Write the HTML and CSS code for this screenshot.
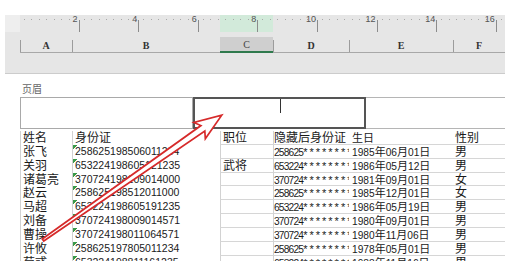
FILE: index.html
```html
<!DOCTYPE html>
<html lang="zh-CN">
<head>
<meta charset="utf-8">
<title>页眉</title>
<link rel="stylesheet" href="styles.css">
</head>
<body>
<div class="topgap"></div>
<div class="chrome">
  <div class="ruler">
    <div class="ruler-left"></div>
    <div class="ruler-main">
      <div class="seg"><span>2</span></div>
      <div class="seg"><span>4</span></div>
      <div class="seg"><span>6</span></div>
      <div class="seg"><span>8</span></div>
      <div class="seg"><span>10</span></div>
      <div class="seg"><span>12</span></div>
      <div class="seg"><span>14</span></div>
      <div class="seg"><span>16</span></div>
    </div>
  </div>
  <div class="colhead">
    <div class="ch">A</div>
    <div class="ch">B</div>
    <div class="ch sel">C</div>
    <div class="ch">D</div>
    <div class="ch">E</div>
    <div class="ch">F</div>
  </div>
</div>

<div class="page">
  <div class="label">页眉</div>
  <div class="hdrbox">
    <div class="hb1"></div>
    <div class="hb2"><div class="caret"></div></div>
    <div class="hb3"></div>
  </div>

  <div class="tbl">
    <div class="c a">姓名</div><div class="c b">身份证</div><div class="c cc">职位</div><div class="c d">隐藏后身份证</div><div class="c e">生日</div><div class="c f">性别</div>

    <div class="c a">张飞</div><div class="c b id">258625198506011234</div><div class="c cc"></div><div class="c d"><span class="dn">258625</span><span class="st">********</span></div><div class="c e"><span class="n">1985</span>年<span class="n">06</span>月<span class="n">01</span>日</div><div class="c f">男</div>

    <div class="c a">关羽</div><div class="c b id">653224198605121235</div><div class="c cc">武将</div><div class="c d"><span class="dn">653224</span><span class="st">********</span></div><div class="c e"><span class="n">1986</span>年<span class="n">05</span>月<span class="n">12</span>日</div><div class="c f">男</div>

    <div class="c a">诸葛亮</div><div class="c b id">370724198109014000</div><div class="c cc"></div><div class="c d"><span class="dn">370724</span><span class="st">********</span></div><div class="c e"><span class="n">1981</span>年<span class="n">09</span>月<span class="n">01</span>日</div><div class="c f">女</div>

    <div class="c a">赵云</div><div class="c b id">258625198512011000</div><div class="c cc"></div><div class="c d"><span class="dn">258625</span><span class="st">********</span></div><div class="c e"><span class="n">1985</span>年<span class="n">12</span>月<span class="n">01</span>日</div><div class="c f">女</div>

    <div class="c a">马超</div><div class="c b id">653224198605191235</div><div class="c cc"></div><div class="c d"><span class="dn">653224</span><span class="st">********</span></div><div class="c e"><span class="n">1986</span>年<span class="n">05</span>月<span class="n">19</span>日</div><div class="c f">男</div>

    <div class="c a">刘备</div><div class="c b id">370724198009014571</div><div class="c cc"></div><div class="c d"><span class="dn">370724</span><span class="st">********</span></div><div class="c e"><span class="n">1980</span>年<span class="n">09</span>月<span class="n">01</span>日</div><div class="c f">男</div>

    <div class="c a">曹操</div><div class="c b id">370724198011064571</div><div class="c cc"></div><div class="c d"><span class="dn">370724</span><span class="st">********</span></div><div class="c e"><span class="n">1980</span>年<span class="n">11</span>月<span class="n">06</span>日</div><div class="c f">男</div>

    <div class="c a">许攸</div><div class="c b id">258625197805011234</div><div class="c cc"></div><div class="c d"><span class="dn">258625</span><span class="st">********</span></div><div class="c e"><span class="n">1978</span>年<span class="n">05</span>月<span class="n">01</span>日</div><div class="c f">男</div>

    <div class="c a">荀彧</div><div class="c b id">653224198811161235</div><div class="c cc"></div><div class="c d"><span class="dn">653224</span><span class="st">********</span></div><div class="c e"><span class="n">1988</span>年<span class="n">11</span>月<span class="n">16</span>日</div><div class="c f">男</div>
  </div>
</div>

<svg class="arrow" width="512" height="261" viewBox="0 0 512 261" aria-hidden="true">
  <g transform="translate(43 240) rotate(-34.93)">
    <polygon points="0,-1.3 195,-3.4 191,-10 218,0 191,10 195,3.4 0,1.3" fill="#ffffff" stroke="#d62a2a" stroke-width="1.7" stroke-linejoin="miter"/>
  </g>
</svg>
</body>
</html>
```

FILE: styles.css
```css
* { box-sizing: border-box; }

html, body {
  margin: 0;
  padding: 0;
}

body {
  width: 512px;
  height: 261px;
  overflow: hidden;
  background: #ffffff;
  position: relative;
  font-family: "Noto Sans CJK SC", "Liberation Sans", sans-serif;
  color: #1a1a1a;
}

.topgap { height: 15px; }

.chrome {
  margin-left: 5px;
  width: 500px;
  height: 59px;
  background: #e6e6e6;
  border-bottom: 1px solid #cccccc;
}

.ruler {
  height: 17px;
  display: flex;
  overflow: hidden;
}

.ruler-left {
  width: 15px;
  background: #eeeeee;
}

.ruler-main {
  flex: 1;
  display: flex;
  background:
    repeating-linear-gradient(to right, #a9a9a9 0 1px, transparent 1px 7.45px) 4px 4px / 100% 1px no-repeat,
    linear-gradient(to right, transparent 200px, #d2eada 200px, #d2eada 253px, transparent 253px);
}

.seg {
  width: 59.6px;
  flex: none;
  height: 17px;
  text-align: right;
  padding-right: 2px;
  background: linear-gradient(#8c8c8c, #8c8c8c) right bottom / 1px 12px no-repeat;
  font-family: "Liberation Sans", sans-serif;
  font-size: 9px;
  line-height: 9px;
  color: #555555;
}

.seg span {
  display: inline-block;
  margin-top: -4px;
}

.colhead {
  display: grid;
  grid-template-columns: 52px 148px 53px 76px 104px 52px;
  margin-left: 15px;
  height: 21px;
}

.ch {
  display: flex;
  align-items: flex-end;
  justify-content: center;
  padding-bottom: 1px;
  border-bottom: 1px solid #a8a8a8;
  background: linear-gradient(#9c9c9c, #9c9c9c) left bottom / 1px 12px no-repeat;
  font-family: "Liberation Serif", serif;
  font-weight: bold;
  font-size: 10px;
  line-height: 10px;
  color: #333333;
}

.ch.sel {
  border-bottom: 2px solid #2f7a4d;
  background: linear-gradient(#cfcfcf, #cfcfcf) left bottom / 100% 14px no-repeat;
  color: #444444;
  font-weight: normal;
}

.page {
  padding-left: 20px;
}

.label {
  margin: 9px 0 0 2px;
  font-size: 10px;
  line-height: 12px;
  color: #666666;
}

.hdrbox {
  display: grid;
  grid-template-columns: 173px 173px 139px;
  height: 32px;
  margin-top: 2px;
}

.hb1 { border: 1px solid #a9a9a9; }

.hb2 {
  border: 2px solid #555555;
  display: flex;
  align-items: flex-start;
}

.caret {
  width: 1px;
  height: 14px;
  margin: 0 0 0 85px;
  background: #333333;
}

.hb3 {
  border-top: 1px solid #b5b5b5;
  border-bottom: 1px solid #b5b5b5;
}

.tbl {
  display: grid;
  grid-template-columns: 52px 148px 53px 76px 104px 52px;
  grid-auto-rows: 13.85px;
  margin-top: 2px;
}

.c {
  font-size: 12px;
  line-height: 12.85px;
  white-space: nowrap;
  padding-left: 2px;
  color: #1a1a1a;
}

.a { border-left: 1px solid #d2d2d2; }
.b { border-left: 1px solid #d2d2d2; }

.cc, .d, .e, .f { border-bottom: 1px solid #d6d6d6; }
.cc { border-left: 1px solid #d2d2d2; }
.d { border-left: 1px solid #d2d2d2; padding-left: 0; overflow: hidden; }
.e { padding-left: 3px; font-size: 11px; }
.f { font-size: 12px; }

.id {
  font-family: "Liberation Sans", sans-serif;
  font-size: 10.5px;
  background: linear-gradient(135deg, #3a9a4a 0, #3a9a4a 3px, transparent 3px) 0 0 / 6px 6px no-repeat;
}

.dn {
  font-family: "Liberation Sans", sans-serif;
  font-size: 10.2px;
  letter-spacing: -0.8px;
}

.st {
  font-family: "Liberation Sans", sans-serif;
  font-size: 11px;
  letter-spacing: 2px;
}

.n {
  font-family: "Liberation Sans", sans-serif;
  font-size: 10.2px;
}

.arrow {
  position: absolute;
  left: 0;
  top: 0;
  pointer-events: none;
}
```
